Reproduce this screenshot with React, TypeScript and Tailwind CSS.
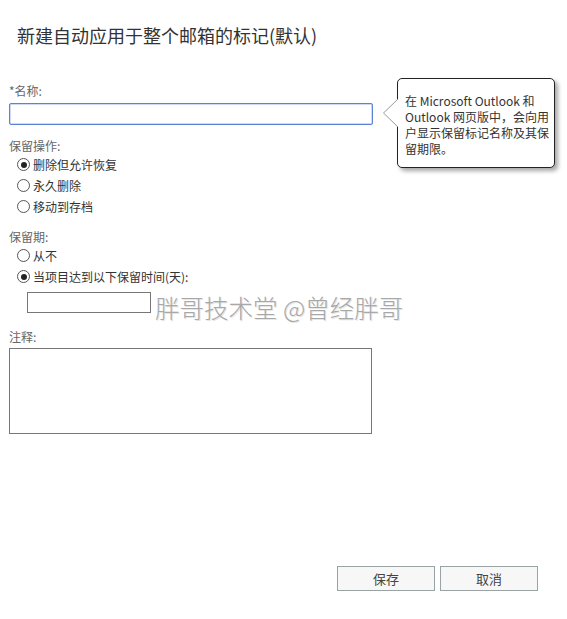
import React from "react";

const font = { fontFamily: '"Segoe UI", "Noto Sans CJK SC", "Noto Sans", sans-serif' };

function Radio({ checked, label }: { checked?: boolean; label: string }) {
  return (
    <div className="flex h-[21px] items-center pl-[8px]">
      <span className="flex h-[13px] w-[13px] items-center justify-center rounded-full border border-[#555] bg-white">
        {checked && <span className="h-[6px] w-[6px] rounded-full bg-[#222]" />}
      </span>
      <span className="ml-[3px] text-[12px] leading-[16px] text-[#333]">{label}</span>
    </div>
  );
}

export default function App() {
  return (
    <div className="relative h-[619px] w-[567px] overflow-hidden bg-white" style={font}>
      <div className="flex flex-col pl-[9px] pt-[23px]">
        <h1 className="ml-[8px] text-[18px] leading-[24px] text-[#333]">新建自动应用于整个邮箱的标记(默认)</h1>

        <label className="mt-[36px] text-[12px] leading-[16px] text-[#666]">*名称:</label>
        <div className="mt-[4px] h-[22px] w-[364px] rounded-[2px] border border-[#5b84d4] bg-white shadow-[inset_0_0_0_0.5px_#9db5e6]" />

        <div className="mt-[13px] text-[12px] leading-[16px] text-[#666]">保留操作:</div>
        <Radio checked label="删除但允许恢复" />
        <Radio label="永久删除" />
        <Radio label="移动到存档" />

        <div className="mt-[12px] text-[12px] leading-[16px] text-[#666]">保留期:</div>
        <Radio label="从不" />
        <Radio checked label="当项目达到以下保留时间(天):" />
        <div className="ml-[18px] mt-[5px] h-[21px] w-[124px] border border-[#777] bg-white" />

        <div className="mt-[16px] text-[12px] leading-[16px] text-[#666]">注释:</div>
        <div className="mt-[3px] h-[86px] w-[363px] border border-[#777] bg-white" />

        <div className="mt-[132px] flex gap-[5px] pl-[328px]">
          <button className="h-[25px] w-[98px] border border-[#9aa3a3] bg-[#f7f7f7] text-[13px] text-[#444]">保存</button>
          <button className="h-[25px] w-[98px] border border-[#9aa3a3] bg-[#f7f7f7] text-[13px] text-[#444]">取消</button>
        </div>
      </div>

      <div
        className="absolute left-[155px] top-[292px] whitespace-nowrap text-[24.5px] font-light leading-[32px] text-[#a8a8a8]"
        style={{ ...font, textShadow: "1px 1px 0 #e6e6e6" }}
      >
        胖哥技术堂 @曾经胖哥
      </div>

      <div className="absolute left-[397px] top-[78px] h-[90px] w-[158px] whitespace-nowrap rounded-[5px] border border-[#222] bg-white pl-[7px] pt-[14px] text-[12px] leading-[16px] text-[#333] shadow-[3px_3px_4px_rgba(0,0,0,0.35)]">
        在 Microsoft Outlook 和
        <br />
        Outlook 网页版中，会向用
        <br />
        户显示保留标记名称及其保
        <br />
        留期限。
      </div>
      <svg className="absolute left-[382px] top-[98px]" width="17" height="30" viewBox="0 0 17 30">
        <path d="M16 1 L1.5 15 L16 29 Z" fill="white" />
        <path d="M16 1 L1.5 15 L16 29" fill="none" stroke="#999" strokeWidth="1" />
      </svg>
    </div>
  );
}
